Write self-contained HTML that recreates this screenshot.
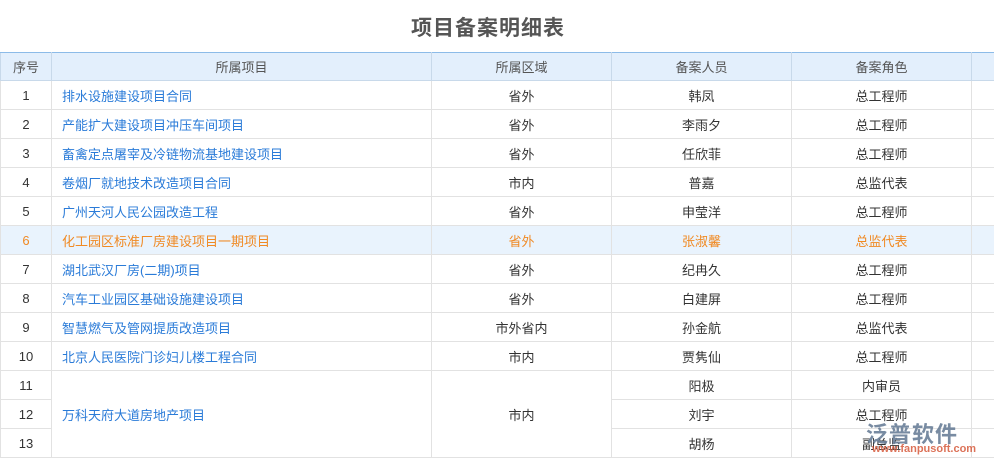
<!DOCTYPE html>
<html><head><meta charset="utf-8"><style>
body{margin:0;width:994px;height:460px;overflow:hidden;background:#fff;font-family:"Liberation Sans","Noto Sans CJK SC",sans-serif;position:relative}
h1{position:absolute;top:12px;left:0;width:976px;margin:0;text-align:center;font-size:21px;font-weight:bold;color:#555;letter-spacing:1px}
table{position:absolute;top:52px;left:0;border-collapse:collapse;table-layout:fixed;width:994px;font-size:13px;color:#333}
td,th{border:1px solid #e2e2e2;height:28px;padding:0;text-align:center;font-weight:normal}
th{background:#e3effc;color:#555;border-color:#c8d9ea;border-top:1px solid #8cbbe8;height:27px}
td.p{text-align:left;padding-left:10px;color:#2a7bd8}
tr.h td{background:#e9f3fd;color:#f08a24}
.wm{position:absolute;left:866px;top:417px;font-size:22px;font-weight:bold;color:#6a7f98;letter-spacing:1px;opacity:.9}
.wm2{position:absolute;left:872px;top:443px;font-size:11px;color:#d65a3c;font-weight:bold;opacity:.85}
</style></head><body>
<h1>项目备案明细表</h1>
<table>
<colgroup><col style="width:51px"><col style="width:380px"><col style="width:180px"><col style="width:180px"><col style="width:180px"><col style="width:23px"></colgroup>
<tr><th>序号</th><th>所属项目</th><th>所属区域</th><th>备案人员</th><th>备案角色</th><th></th></tr>
<tr><td>1</td><td class="p">排水设施建设项目合同</td><td>省外</td><td>韩凤</td><td>总工程师</td><td></td></tr>
<tr><td>2</td><td class="p">产能扩大建设项目冲压车间项目</td><td>省外</td><td>李雨夕</td><td>总工程师</td><td></td></tr>
<tr><td>3</td><td class="p">畜禽定点屠宰及冷链物流基地建设项目</td><td>省外</td><td>任欣菲</td><td>总工程师</td><td></td></tr>
<tr><td>4</td><td class="p">卷烟厂就地技术改造项目合同</td><td>市内</td><td>普嘉</td><td>总监代表</td><td></td></tr>
<tr><td>5</td><td class="p">广州天河人民公园改造工程</td><td>省外</td><td>申莹洋</td><td>总工程师</td><td></td></tr>
<tr class="h"><td>6</td><td class="p" style="color:#f08a24">化工园区标准厂房建设项目一期项目</td><td>省外</td><td>张淑馨</td><td>总监代表</td><td></td></tr>
<tr><td>7</td><td class="p">湖北武汉厂房(二期)项目</td><td>省外</td><td>纪冉久</td><td>总工程师</td><td></td></tr>
<tr><td>8</td><td class="p">汽车工业园区基础设施建设项目</td><td>省外</td><td>白建屏</td><td>总工程师</td><td></td></tr>
<tr><td>9</td><td class="p">智慧燃气及管网提质改造项目</td><td>市外省内</td><td>孙金航</td><td>总监代表</td><td></td></tr>
<tr><td>10</td><td class="p">北京人民医院门诊妇儿楼工程合同</td><td>市内</td><td>贾隽仙</td><td>总工程师</td><td></td></tr>
<tr><td>11</td><td class="p" rowspan="3">万科天府大道房地产项目</td><td rowspan="3">市内</td><td>阳极</td><td>内审员</td><td></td></tr>
<tr><td>12</td><td>刘宇</td><td>总工程师</td><td></td></tr>
<tr><td>13</td><td>胡杨</td><td>副总监</td><td></td></tr>
</table>
<div class="wm">泛普软件</div>
<div class="wm2">www.fanpusoft.com</div>
</body></html>
